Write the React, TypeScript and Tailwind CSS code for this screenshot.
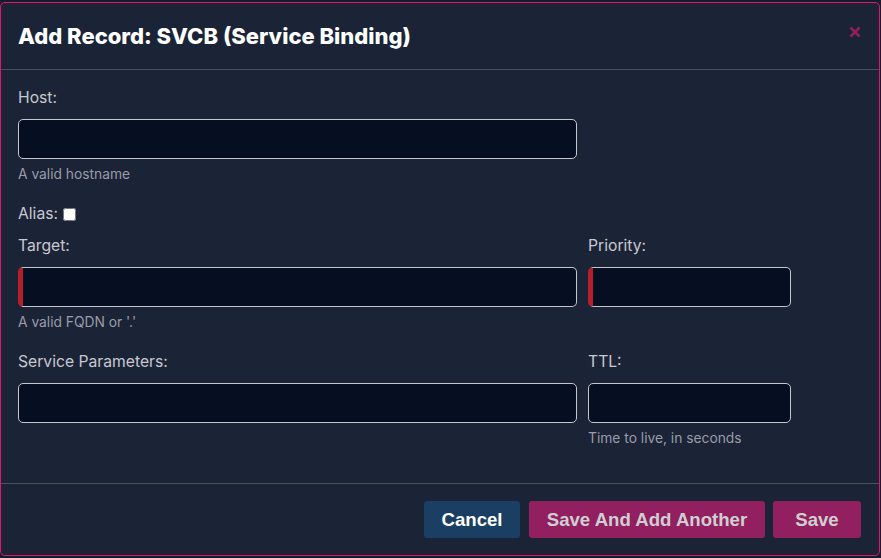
import React from 'react';

interface FieldProps {
  label: string;
  help?: string;
  invalid?: boolean;
  width: string;
}

const Field: React.FC<FieldProps> = ({ label, help, invalid, width }) => {
  return (
    <div className={`flex flex-col ${width}`}>
      <label className="mb-[10px] text-[15.7px] leading-[22px] text-[#c8c9d0]">{label}</label>
      <input
        type="text"
        className={`h-[40px] w-full rounded-[5px] border border-[#c6c7cc] bg-[#060f21] outline-none ${
          invalid ? 'border-l-[5px] border-l-[#b51f29]' : ''
        }`}
      />
      {help ? (
        <span className="mt-[6px] text-[13.8px] leading-[18px] text-[#9a9ca8]">{help}</span>
      ) : (
        <span className="mt-[6px] h-[18px]" />
      )}
    </div>
  );
};

const App: React.FC = () => {
  return (
    <div className="h-[558px] w-[881px] bg-[#151c2c] pt-[2px] font-['Inter','Noto_Sans',sans-serif]">
      <div className="flex h-[554px] w-[880px] flex-col rounded-[5px] border border-[#e3166f] bg-[#1b2337]">
        <div className="flex h-[67px] items-center justify-between border-b border-[#4b505b] px-[17px]">
          <h1 className="text-[22px] font-extrabold text-white">Add Record: SVCB (Service Binding)</h1>
          <button className="mr-[1px] mt-[-8px] text-[#8f1f5e]">
            <svg width="12" height="12" viewBox="0 0 12 12">
              <path d="M1.5 1.5 L10.5 10.5 M10.5 1.5 L1.5 10.5" stroke="currentColor" strokeWidth="2.6" />
            </svg>
          </button>
        </div>

        <div className="flex flex-1 flex-col px-[17px] pt-[17px]">
          <Field label="Host:" help="A valid hostname" width="w-[559px]" />

          <div className="mt-[20px] flex items-center text-[15.7px] leading-[22px] text-[#c8c9d0]">
            <span>Alias:</span>
            <input type="checkbox" className="ml-[5px] h-[13px] w-[13px]" />
          </div>

          <div className="mt-[10px] flex gap-[11px]">
            <Field label="Target:" help="A valid FQDN or '.'" invalid width="w-[559px]" />
            <Field label="Priority:" invalid width="w-[203px]" />
          </div>

          <div className="mt-[20px] flex gap-[11px]">
            <Field label="Service Parameters:" width="w-[559px]" />
            <Field label="TTL:" help="Time to live, in seconds" width="w-[203px]" />
          </div>
        </div>

        <div className="flex h-[72px] items-center justify-end gap-[8px] border-t border-[#4b505b] pr-[18px] font-['Liberation_Sans',Arial,sans-serif] text-[18.6px] font-bold">
          <button className="mr-[1px] flex h-[37px] w-[96px] items-center justify-center rounded-[3px] bg-[#1a3f63] text-white">
            Cancel
          </button>
          <button className="flex h-[37px] w-[236px] items-center justify-center rounded-[3px] bg-[#921f60] text-[#cfcfd2]">
            Save And Add Another
          </button>
          <button className="flex h-[37px] w-[88px] items-center justify-center rounded-[3px] bg-[#921f60] text-[#cfcfd2]">
            Save
          </button>
        </div>
      </div>
    </div>
  );
};

export default App;
